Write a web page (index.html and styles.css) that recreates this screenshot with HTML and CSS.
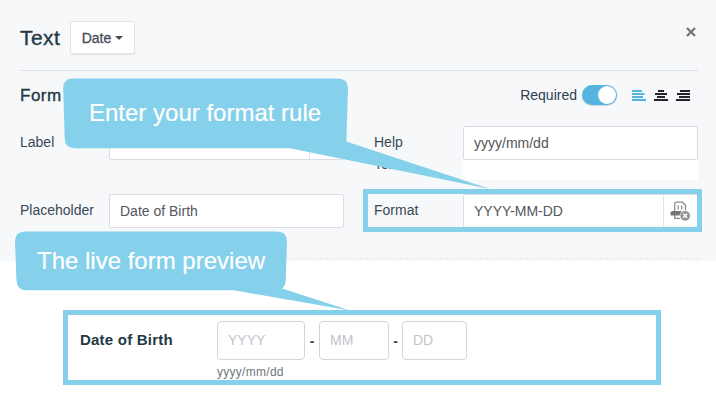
FILE: index.html
```html
<!DOCTYPE html>
<html lang="en">
<head>
<meta charset="utf-8">
<title>Form field settings</title>
<link rel="stylesheet" href="styles.css">
</head>
<body>
<section class="panel">
  <header class="header">
    <h1 class="title">Text</h1>
    <button class="type-button"><span>Date</span><i class="caret"></i></button>
    <svg class="close" width="10" height="10" viewBox="0 0 10 10"><path d="M1 1L9 9M9 1L1 9"/></svg>
  </header>
  <div class="section-head">
    <h2 class="section-title">Form</h2>
    <span class="required">Required</span>
    <span class="toggle"><i class="knob"></i></span>
    <div class="aligns">
      <svg class="align active" width="14" height="12" viewBox="0 0 14 12"><path d="M0 1H10M0 4H12.5M0 7H11M0 10H14"/></svg>
      <svg class="align" width="14" height="12" viewBox="0 0 14 12"><path d="M4 1H10M1 4H13M3 7H11M0 10H14"/></svg>
      <svg class="align" width="14" height="12" viewBox="0 0 14 12"><path d="M4 1H14M1 4H14M3 7H14M0 10H14"/></svg>
    </div>
  </div>
  <div class="fields">
    <label class="label">Label</label>
    <div class="input"><span class="addon"></span></div>
    <label class="label right help">Help<br>Text</label>
    <div class="help-area"><div class="input">yyyy/mm/dd</div></div>
    <label class="label">Placeholder</label>
    <div class="input">Date of Birth</div>
    <label class="label right">Format</label>
    <div class="input"><span class="rule">YYYY-MM-DD</span>
      <span class="addon"><svg width="21" height="20" viewBox="0 0 21 20">
        <path class="paper" d="M4.7 10V3Q4.7 1.2 6.5 1.2H12.5L15.5 4.2V9M8.2 4.5V8.5M11.7 4.5V8.5M4.7 14V17.3H10"/>
        <path class="ink" d="M.5 11L2.5 10H11.5V14.5H1.5Q.5 14.5 .5 13.5Z"/>
        <circle class="badge" cx="15.2" cy="14.8" r="5.2"/>
        <path class="cross" d="M13.2 12.8L17.2 16.8M17.2 12.8L13.2 16.8"/>
      </svg></span>
    </div>
  </div>
</section>
<section class="preview">
  <strong class="preview-label">Date of Birth</strong>
  <div class="date">
    <div class="parts">
      <span class="part year">YYYY</span><span class="dash">-</span>
      <span class="part month">MM</span><span class="dash last">-</span>
      <span class="part day">DD</span>
    </div>
    <div class="hint">yyyy/mm/dd</div>
  </div>
</section>
<div class="format-frame"></div>
<svg class="callouts" width="716" height="403" viewBox="0 0 716 403">
  <path d="M73 78.5H338Q348 78.5 348 88.5L346.3 141.5L490 189L290 148.2H75Q65 148.2 64.7 138.5L63.2 88.5Q63 78.5 73 78.5Z"/>
  <path d="M25 231.5H277Q287 231.5 287 241.5L285.7 280Q285.5 285.5 282.2 288.5L350 310.5L234 290.3H26.5Q17 290.3 16.5 280.5L15 241.5Q15 231.5 25 231.5Z"/>
</svg>
<div class="callout-text first">Enter your format rule</div>
<div class="callout-text second">The live form preview</div>
</body>
</html>
```
FILE: styles.css
```css
* { box-sizing: border-box; }
body { margin: 0; width: 716px; height: 403px; overflow: hidden; position: relative; background: #fff; color: #2f4050; font: 14px/20px "Liberation Sans", Arial, sans-serif; }
h1, h2 { margin: 0; font-weight: 400; color: #233845; }

.panel { height: 261px; padding: 0 18px 0 20px; background: #f7f8fa; }
.header { display: flex; align-items: center; height: 71px; padding-top: 5px; border-bottom: 1px solid #dcdfe3; }
.title { width: 50px; font-size: 21px; line-height: 24px; letter-spacing: .4px; -webkit-text-stroke: .35px; }
.type-button { display: flex; align-items: center; justify-content: center; gap: 4px; width: 65px; height: 33px; padding: 0; border: 1px solid #e1e5ea; border-radius: 2px; background: #fff; box-shadow: 0 1px 1px rgba(0, 0, 0, .07); color: #494a58; font: 14px/20px "Liberation Sans", Arial, sans-serif; -webkit-text-stroke: .3px; }
.caret { border: 4px solid transparent; border-top: 4.5px solid #494a58; border-bottom: 0; }
.close { margin: -11px 2px 0 auto; stroke: #777; stroke-width: 2.4; }

.section-head { display: flex; align-items: center; height: 55px; padding-bottom: 7px; }
.section-title { padding-top: 1px; font-size: 17px; letter-spacing: .5px; -webkit-text-stroke: .35px; }
.required { margin-left: auto; }
.toggle { display: flex; justify-content: flex-end; width: 35px; height: 20px; margin-left: 5px; padding: 1px; border-radius: 10px; background: #55b4e0; box-shadow: 0 1px 1px #ccd3d8; }
.knob { width: 18px; height: 18px; border-radius: 50%; background: #fff; }
.aligns { display: flex; gap: 8px; margin: 2px 8px 0 15px; }
.align { stroke: #25262c; stroke-width: 2.1; }
.align.active { stroke: #55b4e0; }

.fields { display: grid; grid-template-columns: 89px 235px 119px 235px; grid-template-rows: 54px 34px; row-gap: 14px; height: 133px; align-content: start; border-bottom: 1px dashed #e2e5ea; }
.label { padding-top: 6px; color: #374957; }
.right { padding-left: 30px; }
.help { padding-top: 5px; line-height: 22px; }
.input { display: flex; align-items: center; height: 34px; padding-left: 10px; border: 1px solid #d9dce5; border-radius: 2px; background: #fff; color: #54565c; }
.help-area { height: 54px; background: #fff; }
.addon { display: flex; align-items: center; justify-content: center; width: 34px; height: 32px; margin-left: auto; border-left: 1px solid #dfe2ea; }
.paper { fill: none; stroke: #8a8a8a; stroke-width: 1.3; }
.ink { fill: #737477; }
.badge { fill: #929292; stroke: #fff; stroke-width: .7; }
.cross { stroke: #fff; stroke-width: 1.5; }

.preview { display: flex; width: 598px; height: 75px; margin: 49px 0 0 63px; padding: 6px 12px 0; border: 5px solid #85d0eb; }
.preview-label { width: 137px; padding-top: 9px; font-size: 15px; letter-spacing: .22px; color: #233845; }
.parts { display: flex; align-items: center; }
.part { width: 70px; height: 39px; padding-left: 10px; border: 1px solid #d5d5d7; border-radius: 4px; line-height: 37px; color: #c4c4cb; }
.year { width: 88px; }
.day { width: 65px; }
.dash { width: 14px; text-align: center; color: #374957; font-weight: 700; }
.last { width: 13px; }
.hint { font-size: 12px; line-height: 16px; letter-spacing: .28px; padding-top: 4px; color: #6c777b; }

.format-frame { position: absolute; left: 363px; top: 189px; width: 339px; height: 43px; border: 5px solid #85d0eb; }
.callouts { position: absolute; left: 0; top: 0; fill: #85d0eb; }
.callout-text { position: absolute; color: #fff; font-size: 24px; line-height: 30px; white-space: nowrap; -webkit-text-stroke: .2px; }
.first { left: 89px; top: 98px; }
.second { left: 37px; top: 246px; }
```
